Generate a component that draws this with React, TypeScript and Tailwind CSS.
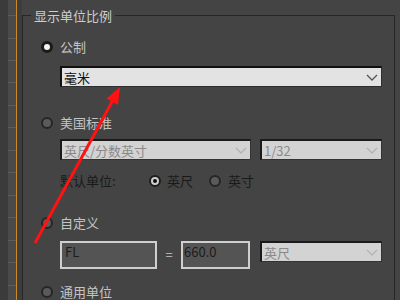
import React from "react";

const Radio = ({ kind }: { kind: "on" | "dot" | "off" }) => {
    if (kind === "on") {
        return <span className="w-[12px] h-[12px] rounded-full border-[3px] border-[#1a1a1a] bg-[#f4f4f4] shrink-0" />;
    }
    if (kind === "dot") {
        return (
            <span className="w-[12px] h-[12px] rounded-full border-[2px] border-[#1e1e1e] bg-[#cfcfcf] shrink-0 flex items-center justify-center">
                <span className="w-[4px] h-[4px] rounded-full bg-[#111]" />
            </span>
        );
    }
    return <span className="w-[12px] h-[12px] rounded-full border-[2px] border-[#262626] bg-[#5a5a5a] shrink-0" />;
};

const Chevron = ({ color }: { color: string }) => (
    <svg width="12" height="7" viewBox="0 0 12 7" className="shrink-0">
        <path d="M1 1 L6 6 L11 1" fill="none" stroke={color} strokeWidth="1.3" />
    </svg>
);

const Select = ({ text, width, enabled }: { text: string; width: string; enabled?: boolean }) => (
    <div
        className={
            enabled
                ? `${width} h-[21px] flex items-center justify-between bg-[#e3e3e3] border-t-2 border-l-2 border-[#111] border-r border-b border-r-[#2e2e2e] border-b-[#2e2e2e] pl-[2px] pr-[3px] text-[13px] text-[#111]`
                : `${width} h-[21px] flex items-center justify-between bg-[#d3d3d3] border-t-2 border-l-2 border-[#1a1a1a] border-r border-b border-r-[#333] border-b-[#333] pl-[2px] pr-[3px] text-[13px] text-[#8a8a8a]`
        }
    >
        <span className="leading-[17px]">{text}</span>
        <Chevron color={enabled ? "#555" : "#b4b4b4"} />
    </div>
);

const Label = ({ radio, text }: { radio: "on" | "dot" | "off"; text: string }) => (
    <div className="flex items-center gap-[7px] h-[20px] pl-[18px]">
        <Radio kind={radio} />
        <span className="text-[13px] leading-[20px] text-[#c4c4c4]">{text}</span>
    </div>
);

const stripMarks = [16, 23, 22, 22, 23, 22, 23, 22, 23, 22, 23, 22, 23];

export default function App() {
    return (
        <div className="relative w-[400px] h-[300px] overflow-hidden bg-[#444444] flex font-['Noto_Sans_CJK_SC','Noto_Sans',sans-serif]">
            <div className="w-[8px] bg-[#3b3b3b]" />
            <div className="w-[8px] bg-[#4a4a4a] flex flex-col">
                {stripMarks.map((h, i) => (
                    <div key={i} className="shrink-0 flex flex-col justify-end" style={{ height: h }}>
                        <div className="h-[1px] bg-[#5c5c5c]" />
                    </div>
                ))}
            </div>
            <div className="w-[1px] bg-[#c98a28]" />
            <div className="w-[5px] bg-[#3d3d3d]" />

            <div className="flex-1 pt-[7px] pr-[5px]">
                <fieldset className="border border-[#262626] h-[400px] pr-[12px]">
                    <legend className="ml-[8px] px-[3px] text-[13px] leading-[17px] text-[#cdcdcd]">显示单位比例</legend>

                    <div className="mt-[13px]">
                        <Label radio="on" text="公制" />
                    </div>
                    <div className="mt-[9px] ml-[37px]">
                        <Select text="毫米" width="w-[322px]" enabled />
                    </div>

                    <div className="mt-[26px]">
                        <Label radio="off" text="美国标准" />
                    </div>
                    <div className="mt-[6px] ml-[37px] flex gap-[9px]">
                        <Select text="英尺/分数英寸" width="w-[191px]" />
                        <Select text="1/32" width="w-[122px]" />
                    </div>

                    <div className="mt-[11px] ml-[37px] flex items-center h-[20px] text-[13px] text-[#1a1a1a]">
                        <span className="w-[89px]">默认单位:</span>
                        <Radio kind="dot" />
                        <span className="ml-[6px] w-[42px]">英尺</span>
                        <Radio kind="off" />
                        <span className="ml-[7px]">英寸</span>
                    </div>

                    <div className="mt-[22px]">
                        <Label radio="off" text="自定义" />
                    </div>
                    <div className="mt-[8px] ml-[37px] flex items-start">
                        <div className="w-[97px] h-[28px] border-2 border-[#cfcfcf] bg-[#545454] pl-[3px] text-[13px] leading-[18px] text-[#1c1c1c]">FL</div>
                        <div className="w-[24px] h-[28px] flex items-center justify-center text-[13px] text-[#c4c4c4]">=</div>
                        <div className="w-[69px] h-[28px] border-2 border-[#cfcfcf] bg-[#545454] pl-[1px] text-[13px] leading-[18px] text-[#1c1c1c]">660.0</div>
                        <div className="ml-[10px]">
                            <Select text="英尺" width="w-[122px]" />
                        </div>
                    </div>

                    <div className="mt-[13px]">
                        <Label radio="off" text="通用单位" />
                    </div>
                </fieldset>
            </div>

            <svg className="absolute left-0 top-0 pointer-events-none" width="400" height="300" viewBox="0 0 400 300">
                <line x1="35" y1="243" x2="113" y2="100" stroke="#ff1212" strokeWidth="3" />
                <polygon points="120,87 106.5,98.5 118,105" fill="#ff1212" />
            </svg>
        </div>
    );
}
